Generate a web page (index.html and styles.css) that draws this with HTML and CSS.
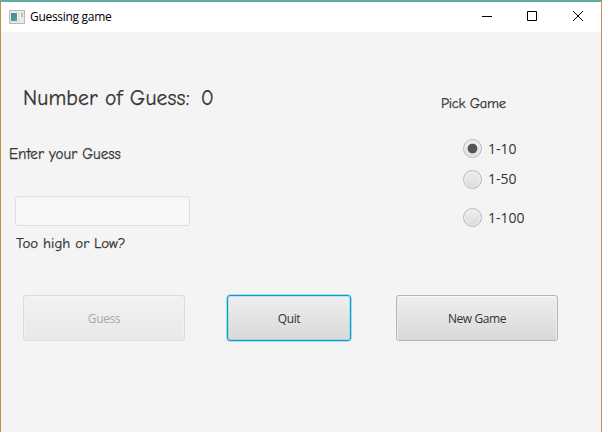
FILE: index.html
```html
<!DOCTYPE html>
<html lang="en">
<head>
<meta charset="utf-8">
<title>Guessing game</title>
<link rel="stylesheet" href="styles.css">
</head>
<body>
<div class="window">
  <header class="titlebar">
    <svg class="app-icon" width="16" height="14" viewBox="0 0 16 14">
      <defs><linearGradient id="pane" x1="0" y1="0" x2="1" y2="1"><stop offset="0" stop-color="#4a80b8"/><stop offset="1" stop-color="#55a878"/></linearGradient></defs>
      <rect x=".5" y=".5" width="15" height="13" fill="#e9e9ec" stroke="#b9b9bf"/>
      <rect x="2" y="3" width="6" height="8" fill="url(#pane)"/>
      <rect x="8" y="3" width="4" height="8" fill="#f6f6f8"/>
      <rect x="9" y="3" width="2" height="8" fill="#e2e2e5"/>
      <rect x="12" y="3" width="2" height="4" fill="#a4ccb4"/>
    </svg>
    <span class="title">Guessing game</span>
    <svg class="controls" width="104" height="12" viewBox="0 0 104 12" fill="none" stroke="#000">
      <path d="M0 6.5H10M45.5 1.5h9v9h-9zM91 1l10 10M101 1L91 11"/>
    </svg>
  </header>
  <main class="content">
    <div class="panels">
      <section class="entry">
        <div class="count"><span class="count-label">Number of Guess:</span><span>0</span></div>
        <label class="prompt" for="guess">Enter your Guess</label>
        <input class="field" id="guess" type="text">
        <div class="hint">Too high or Low?</div>
      </section>
      <section class="picker">
        <div class="pick-title">Pick Game</div>
        <label class="option"><input type="radio" name="range" checked><span>1-10</span></label>
        <label class="option middle"><input type="radio" name="range"><span>1-50</span></label>
        <label class="option last"><input type="radio" name="range"><span>1-100</span></label>
      </section>
    </div>
    <div class="actions">
      <button class="btn wide" disabled><span>Guess</span></button>
      <button class="btn focused"><span>Quit</span></button>
      <button class="btn wide"><span>New Game</span></button>
    </div>
  </main>
</div>
</body>
</html>
```
FILE: styles.css
```css
* { box-sizing: border-box; }
body { margin: 0; font-family: "Open Sans", sans-serif; color: #333; }
.window { height: 432px; background: #f4f4f4; border: 1px solid #bf9248; border-top: 1px solid #62aaa4; border-bottom: 0; overflow: hidden; }
.titlebar { height: 31px; display: flex; align-items: center; background: #fff; border-top: 1px solid #62aaa4; padding: 0 15px 0 8px; }
.app-icon { margin-top: -1px; }
.title { margin-left: 5px; font-size: 12px; line-height: 18px; color: #000; letter-spacing: -.3px; }
.controls { margin: -2px 0 0 auto; }
.panels { display: flex; height: 263px; }
.entry { width: 440px; padding: 53px 0 0 8px; display: flex; flex-direction: column; align-items: flex-start; }
.count, .prompt, .hint, .pick-title { font-family: "Comic Sans MS", "Comic Neue", "Open Sans", sans-serif; white-space: nowrap; -webkit-text-stroke: .25px #333; }
.count { display: flex; gap: 11px; margin-left: 14px; font-size: 21.5px; line-height: 27px; letter-spacing: .15px; }
.prompt { margin-top: 33px; font-size: 15.1px; line-height: 19px; }
.field { width: 175px; height: 30px; margin: 32px 0 8px 6px; border: 1px solid #dfdfdf; border-radius: 3px; background: linear-gradient(#f3f3f3, #f8f8f8 4px); outline: 0; }
.hint { margin-left: 7px; font-size: 14.9px; line-height: 19px; }
.picker { padding-top: 62px; }
.pick-title { font-size: 14.5px; line-height: 19px; margin-bottom: 26px; letter-spacing: -.3px; }
.option { display: flex; align-items: center; gap: 6px; height: 19px; margin: 0 0 12px 22px; font-size: 14px; line-height: 19px; }
.middle span { padding-bottom: 2px; }
.option.last { margin-top: 19px; }
.option input { appearance: none; width: 19px; height: 19px; margin: 0; border: 1px solid #b9b9b9; border-radius: 50%; background: linear-gradient(#eee, #dcdcdc); box-shadow: inset 0 0 0 1px #f0f0f0; }
.option input:checked { background: radial-gradient(circle, #555 0 4.5px, transparent 5.2px), linear-gradient(#eee, #dcdcdc); }
.actions { display: flex; padding-left: 22px; }
.btn { height: 46px; width: 124px; padding: 2px 0 0; font: 12px/18px "Open Sans", sans-serif; letter-spacing: -.4px; color: #333; border: 1px solid #b4b4b4; border-radius: 3px; background: linear-gradient(#efefef, #d9d9d9); box-shadow: inset 0 1px 0 #fafafa, inset 1px 0 #ededed, inset -1px 0 #ededed; }
.btn.wide { width: 162px; }
.btn:disabled { opacity: .4; }
.btn.focused { margin: 0 45px 0 42px; border-color: #039ed3; outline: 1px solid rgba(3, 158, 211, .3); outline-offset: 0; box-shadow: inset 0 0 0 1px rgba(3, 158, 211, .18); }
```
